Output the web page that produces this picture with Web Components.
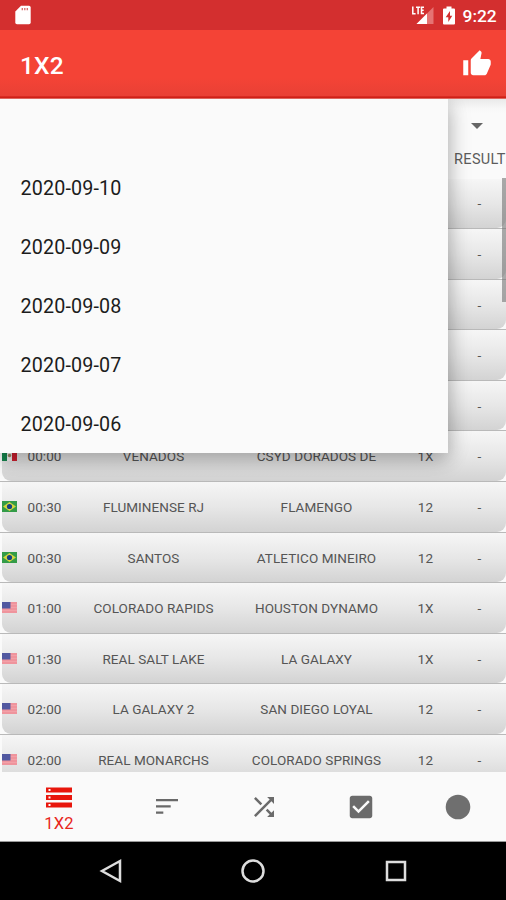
<!DOCTYPE html>
<html lang="en">
<head>
<meta charset="utf-8">
<title>1X2</title>
<style>
html,body{margin:0;height:100%;overflow:hidden}
body{font-family:Roboto,"Liberation Sans",sans-serif;background:#fafafa}
</style>
</head>
<body>
<x-app></x-app>
<script>
const define = (name, html) => customElements.define(name, class extends HTMLElement {
  connectedCallback() {
    if (this.shadowRoot) return;
    const t = document.createElement('template');
    t.innerHTML = typeof html === 'function' ? html(this) : html;
    this.attachShadow({mode: 'open'}).append(t.content.cloneNode(true));
  }
});

define('status-bar', `<style>
:host{display:flex;align-items:center;height:30px;background:#d32f2f;color:#fff;box-sizing:border-box;padding:0 9.500px 0 15px}
svg{display:block}.gap{flex:1}
.clock{font-size:17.400px;font-weight:500;line-height:30px;margin-left:8px;width:34px;white-space:nowrap;padding-top:2px}
</style>
<svg width="17" height="20" viewBox="0 0 17 20"><path d="M6 .7h8q1.700 0 1.700 1.700v15.100q0 1.700-1.700 1.700H2Q.3 19.200.3 17.500V6.500z" fill="#fff"/><path d="M7.300 3v2.200M9.800 3v2.200M12.300 3v2.200" stroke="#d86a6a" stroke-width="1.300"/></svg>
<span class="gap"></span>
<svg width="24" height="20" viewBox="0 0 24 20"><path d="M22.500 2v17H5.500z" fill="#e57373"/><path d="M16 8.500V19H5.500z" fill="#fff"/><path d="M0 0h14v8.500l-2 2H0z" fill="#d32f2f"/><path d="M1.800 1.500v7.200h2.800M5 2.300h4.200M7.100 2v7.200M13 2.300h-2.500v6.200H13M10.500 5.300h2.200" fill="none" stroke="#fff" stroke-width="1.500"/></svg>
<svg width="12" height="19" viewBox="0 0 12 19" style="margin-left:8px"><path d="M3.500.5h5v2H11q1 0 1 1v14q0 1-1 1H1q-1 0-1-1v-14q0-1 1-1h2.500z" fill="#fff"/><path d="M7 5L2.700 11.300h2.600V16l4-6.200H7z" fill="#d32f2f"/></svg>
<span class="clock">9:22</span>`);

define('app-bar', `<style>
:host{display:flex;align-items:center;justify-content:space-between;height:69px;box-sizing:border-box;padding:2px 14px 0 20px;color:#fff;
background:linear-gradient(#f44336 0,#f44336 48px,#e94035 66px,#c9150e 67px,#d32a20 68px,#e9a29d 69px)}
.t{font-size:24.500px;font-weight:500;line-height:32px;letter-spacing:.2px}svg{display:block}
</style><span class="t"><slot></slot></span>
<svg width="30" height="30" viewBox="0 0 24 24" style="margin-top:-3px"><path fill="#fff" d="M1 21h4V9H1v12zm22-11c0-1.100-.9-2-2-2h-6.310l.95-4.570.03-.32c0-.41-.17-.79-.44-1.060L14.170 1 7.590 7.590C7.220 7.950 7 8.450 7 9v10c0 1.100.9 2 2 2h9c.83 0 1.540-.5 1.840-1.220l3.020-7.050c.09-.23.14-.47.14-.73v-2z"/></svg>`);

define('list-head', `<style>
:host{display:flex;flex-direction:column;align-items:flex-end;height:79.500px;background:linear-gradient(#e9e9e9,#f7f7f7 9px,#fafafa 14px);color:#5c5c5c}
svg{display:block;margin:24px 23px 0 0}
.r{font-size:14.500px;line-height:18px;letter-spacing:.35px;margin-top:22px;width:52px;white-space:nowrap}
</style><svg width="12" height="6"><path d="M0 0h12L6 6z" fill="#666"/></svg><span class="r">RESULT</span>`);

const flags = {
 mx:`<rect width="15" height="11" fill="#eee"/><rect width="5" height="11" fill="#16854e"/><rect x="10" width="5" height="11" fill="#cf2030"/><circle cx="7.500" cy="5.500" r="1.700" fill="#9b8660"/>`,
 br:`<rect width="15" height="11" fill="#349c48"/><path d="M7.500 1L14 5.500 7.500 10 1 5.500z" fill="#d5d63e"/><circle cx="7.500" cy="5.500" r="2.600" fill="#174382"/>`,
 us:`<rect width="15" height="11" fill="#f2a1a8"/><path d="M0 1h15M0 4h15M0 7h15M0 10h15" stroke="#ec8791"/><rect width="8.500" height="6.500" fill="#5158a0"/>`
};
define('match-row', el => {
 const a = n => el.getAttribute(n) || '';
 return `<style>
:host{display:block;flex:none;height:50.600px;background:#fafafa;box-sizing:border-box;border-bottom:1px solid #b9b9b9;overflow:hidden}
.card{height:49.600px;margin-left:2px;border-radius:0 0 9px 9px;background:linear-gradient(#f6f6f6,#e7e7e7 50%,#d3d3d3);display:grid;grid-template-columns:15px 55px 163px 163px 55px 53px;align-items:center;text-align:center;font-size:13.500px;line-height:20px;letter-spacing:.07px;color:#555;white-space:nowrap;padding-top:.4px;box-sizing:border-box}
svg{display:block;margin-top:-1px}
</style><div class="card"><svg width="15" height="11">${flags[a('flag')] || ''}</svg><span>${a('time')}</span><span>${a('home')}</span><span>${a('away')}</span><span>${a('tip')}</span><span>-</span></div>`;
});

define('date-menu', `<style>
:host{display:flex;flex-direction:column;position:absolute;left:0;top:0;width:448px;height:354px;box-sizing:border-box;background:#fafafa;box-shadow:0 8px 18px rgba(0,0,0,.24),0 0 24px rgba(0,0,0,.13);clip-path:inset(0 -60px -60px 0);z-index:2}
</style><slot></slot>`);
define('date-item', `<style>
:host{display:flex;flex:none;align-items:center;height:59px;padding:1.500px 0 0 20.500px;box-sizing:border-box;font-size:19.700px;letter-spacing:.16px;color:#1c1c1c}
</style><slot></slot>`);

const icons = {
 list:`<svg width="26" height="22" viewBox="0 0 26 22"><path fill="#e8160c" d="M0 .5h26v5H0zM0 8h26v5H0zM0 15.500h26v5H0z"/><path fill="#fafafa" d="M2.500 2h2v2h-2zM2.500 9.500h2v2h-2zM2.500 17h2v2h-2z"/></svg>`,
 sort:`<svg width="22" height="15" viewBox="0 0 22 15"><path fill="#696969" d="M0 0h22v2.300H0zM0 6.200h14.700v2.300H0zM0 12.500h7.300v2.300H0z"/></svg>`,
 shuffle:`<svg width="30" height="30" viewBox="0 0 24 24"><path fill="#6b6b6b" d="M10.590 9.170L5.410 4 4 5.410l5.170 5.170 1.420-1.410zM14.500 4l2.040 2.040L4 18.590 5.410 20 17.960 7.460 20 9.500V4h-5.500zm.33 9.410l-1.410 1.410 3.130 3.130L14.500 20H20v-5.500l-2.040 2.040-3.130-3.130z"/></svg>`,
 check:`<svg width="30" height="30" viewBox="0 0 24 24"><path fill="#6b6b6b" d="M19 3H5c-1.110 0-2 .9-2 2v14c0 1.100.89 2 2 2h14c1.110 0 2-.9 2-2V5c0-1.100-.89-2-2-2zm-9 14l-5-5 1.410-1.410L10 14.170l7.590-7.590L19 8l-9 9z"/></svg>`,
 dot:`<svg width="26" height="26"><circle cx="13" cy="13" r="12.300" fill="#6f6f6f"/></svg>`
};
define('tab-item', el => `<style>
:host{display:flex;flex-direction:column;align-items:center;justify-content:center;color:#e8261c;font-size:16.500px;line-height:20px;letter-spacing:.2px}
:host([active]){padding-top:8px}
svg{display:block}
span{padding-top:5px}:host(:not([active])) span{display:none}
</style>${icons[el.getAttribute('icon')]}<span><slot></slot></span>`);
define('tab-bar', `<style>
:host{display:grid;grid-template-columns:118px 97px 97px 97px 97px;flex:none;height:70px;background:#fafafa;box-sizing:border-box;border-bottom:1px solid #999}
</style><slot></slot>`);

define('nav-bar', `<style>
:host{display:grid;grid-template-columns:1fr 1fr 1fr;justify-items:center;align-items:center;flex:none;height:58px;padding:0 39px 0 40px;background:#000;box-sizing:border-box}
svg{display:block}svg *{fill:none;stroke:#ddd;stroke-width:2.500}
</style>
<svg width="24" height="26"><path d="M21 3v20L3 13z"/></svg>
<svg width="26" height="26"><circle cx="13" cy="13" r="10.500"/></svg>
<svg width="24" height="24"><rect x="3" y="3" width="18" height="18"/></svg>`);

define('x-app', `<style>
:host{display:flex;flex-direction:column;width:506px;height:900px;overflow:hidden}
main{position:relative;height:673px;flex:none;overflow:hidden;display:flex;flex-direction:column}
list-head{flex:none}
.thumb{position:absolute;right:0;top:79px;width:4.500px;height:124px;background:rgba(120,120,120,.62)}
</style>
<status-bar></status-bar><app-bar>1X2</app-bar>
<main>
<list-head></list-head>
<match-row></match-row><match-row></match-row><match-row></match-row><match-row></match-row><match-row></match-row>
<match-row flag="mx" time="00:00" home="VENADOS" away="CSYD DORADOS DE" tip="1X"></match-row>
<match-row flag="br" time="00:30" home="FLUMINENSE RJ" away="FLAMENGO" tip="12"></match-row>
<match-row flag="br" time="00:30" home="SANTOS" away="ATLETICO MINEIRO" tip="12"></match-row>
<match-row flag="us" time="01:00" home="COLORADO RAPIDS" away="HOUSTON DYNAMO" tip="1X"></match-row>
<match-row flag="us" time="01:30" home="REAL SALT LAKE" away="LA GALAXY" tip="1X"></match-row>
<match-row flag="us" time="02:00" home="LA GALAXY 2" away="SAN DIEGO LOYAL" tip="12"></match-row>
<match-row flag="us" time="02:00" home="REAL MONARCHS" away="COLORADO SPRINGS" tip="12"></match-row>
<div class="thumb"></div>
<date-menu><date-item></date-item><date-item>2020-09-10</date-item><date-item>2020-09-09</date-item><date-item>2020-09-08</date-item><date-item>2020-09-07</date-item><date-item>2020-09-06</date-item></date-menu>
</main>
<tab-bar><tab-item icon="list" active>1X2</tab-item><tab-item icon="sort"></tab-item><tab-item icon="shuffle"></tab-item><tab-item icon="check"></tab-item><tab-item icon="dot"></tab-item></tab-bar>
<nav-bar></nav-bar>`);
</script>
</body>
</html>
